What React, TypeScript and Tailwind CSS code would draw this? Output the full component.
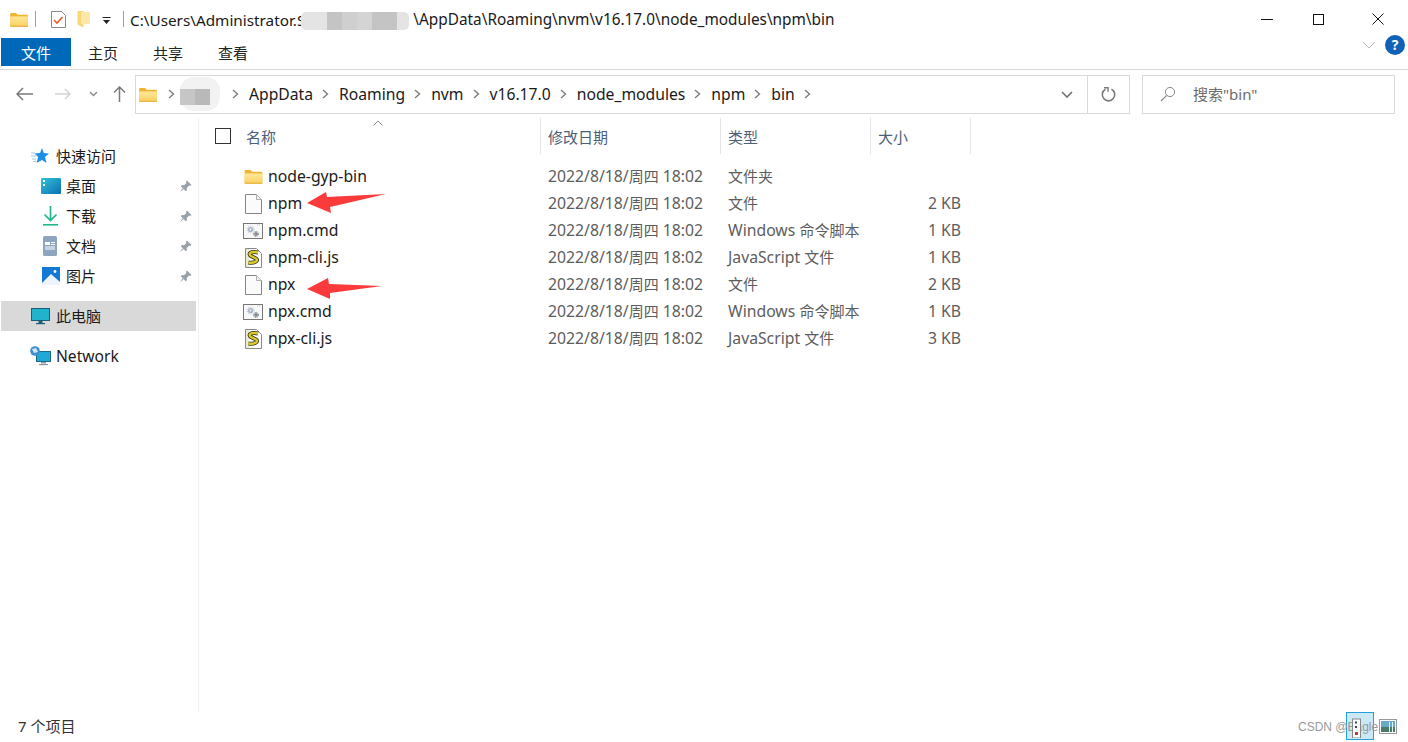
import React from "react";

const FONT = '"Noto Sans", "Noto Sans CJK SC", sans-serif';

function Mix({ text }: { text: string }) {
  const parts = text.split(/([\u4e00-\u9fff]+)/);
  return (
    <>
      {parts.map((p, i) =>
        /[\u4e00-\u9fff]/.test(p) ? (
          <span key={i} className="text-[15px]">
            {p}
          </span>
        ) : (
          <span key={i}>{p}</span>
        )
      )}
    </>
  );
}

function Folder({ w = 20, h = 17, id }: { w?: number; h?: number; id: string }) {
  return (
    <svg width={w} height={h} viewBox="0 0 20 17" className="shrink-0">
      <defs>
        <linearGradient id={id} x1="0" y1="0" x2="0" y2="1">
          <stop offset="0" stopColor="#fee89a" />
          <stop offset="1" stopColor="#fad264" />
        </linearGradient>
      </defs>
      <path d="M0 2 a1 1 0 0 1 1-1 h5.5 l2 2 h10.5 a1 1 0 0 1 1 1 v11.5 a1 1 0 0 1-1 1 h-18 a1 1 0 0 1-1-1z" fill="#efb32e" />
      <rect x="0" y="5" width="20" height="11" fill={`url(#${id})`} />
      <rect x="0" y="15.5" width="20" height="1.2" fill="#e8ac36" />
    </svg>
  );
}

function FileIcon() {
  return (
    <svg width="17" height="20" viewBox="0 0 17 20" className="shrink-0">
      <path d="M0.5 0.5 h11 l5 5 v14 h-16z" fill="#fbfbfb" stroke="#858585" />
      <path d="M11.5 0.5 v5 h5" fill="#f0f0f0" stroke="#b0b0b0" />
    </svg>
  );
}

function CmdIcon() {
  return (
    <svg width="20" height="16" viewBox="0 0 20 16" className="shrink-0">
      <rect x="0.5" y="0.5" width="19" height="15" fill="#f8f8f8" stroke="#777" />
      <path d="M14 2 h4" stroke="#b8b8b8" strokeDasharray="1 1" />
      <circle cx="7.5" cy="6.5" r="2.6" fill="#a9b6c8" />
      <circle cx="7.5" cy="6.5" r="3.4" fill="none" stroke="#a9b6c8" strokeDasharray="1 1.2" />
      <circle cx="7.5" cy="6.5" r="0.9" fill="#f8f8f8" />
      <circle cx="13" cy="11" r="1.7" fill="#5f6670" />
      <circle cx="13" cy="11" r="2.5" fill="none" stroke="#5f6670" strokeDasharray="1 1" />
      <circle cx="13" cy="11" r="0.6" fill="#f8f8f8" />
    </svg>
  );
}

function JsIcon() {
  return (
    <svg width="17" height="20" viewBox="0 0 17 20" className="shrink-0">
      <path d="M0.5 0.5 h11 l5 5 v14 h-16z" fill="#fff" stroke="#8a8a8a" />
      <rect x="1" y="1" width="3" height="18" fill="#e7ecd2" />
      <path d="M13 4.5 C6 3 2.5 5.5 6 8 L11 10.5 C14 12.5 10 15.5 3.5 14.5" fill="none" stroke="#34341c" strokeWidth="4" />
      <path d="M13 4.5 C6 3 2.5 5.5 6 8 L11 10.5 C14 12.5 10 15.5 3.5 14.5" fill="none" stroke="#dccb2e" strokeWidth="2.4" />
    </svg>
  );
}

function Pin() {
  return (
    <svg width="13" height="13" viewBox="0 0 14 14" className="shrink-0">
      <path d="M8.5 0.5 L13.5 5.5 L12 6.5 L10.8 6 L8.3 8.5 L8.5 11 L7.3 12 L2 6.7 L3 5.5 L5.5 5.7 L8 3.2 L7.5 2z" fill="#98a0a8" />
      <path d="M4 9 L0.8 13.2 L5 10z" fill="#98a0a8" />
    </svg>
  );
}

function Chevron() {
  return (
    <svg width="7" height="10" viewBox="0 0 7 10" className="shrink-0">
      <path d="M1 1 L5.5 5 L1 9" fill="none" stroke="#7c7c7c" strokeWidth="1.4" />
    </svg>
  );
}

function Crumb({ label }: { label: string }) {
  return (
    <>
      <span className="ml-[10px] mt-[2px]">{label}</span>
      <div className="ml-[9px]">
        <Chevron />
      </div>
    </>
  );
}

function RedArrow({ w, d }: { w: number; d: string }) {
  return (
    <svg width={w} height="24" viewBox={`0 0 ${w} 24`}>
      <path d={d} fill="#fb3b3b" />
    </svg>
  );
}

const files = [
  { name: "node-gyp-bin", type: "文件夹", size: "", icon: "folder" },
  { name: "npm", type: "文件", size: "2 KB", icon: "file" },
  { name: "npm.cmd", type: "Windows 命令脚本", size: "1 KB", icon: "cmd" },
  { name: "npm-cli.js", type: "JavaScript 文件", size: "1 KB", icon: "js" },
  { name: "npx", type: "文件", size: "2 KB", icon: "file" },
  { name: "npx.cmd", type: "Windows 命令脚本", size: "1 KB", icon: "cmd" },
  { name: "npx-cli.js", type: "JavaScript 文件", size: "3 KB", icon: "js" },
];

function NavRow({ icon, label, pin, active, pl = 65 }: { icon: React.ReactNode; label: string; pin?: boolean; active?: boolean; pl?: number }) {
  return (
    <div className={`relative flex h-[30px] items-center ${active ? "bg-[#d9d9d9]" : ""}`} style={{ paddingLeft: pl }}>
      <div className="absolute top-0 flex h-[30px] w-[24px] items-center justify-center" style={{ left: pl - 28 }}>
        {icon}
      </div>
      <span className="text-[15px] text-[#1a1a1a]">{label}</span>
      {pin && (
        <div className="ml-auto mr-[4px] flex">
          <Pin />
        </div>
      )}
    </div>
  );
}

export default function App() {
  return (
    <div className="relative flex h-[742px] w-[1408px] flex-col overflow-hidden bg-white" style={{ fontFamily: FONT }}>
      {/* Title bar */}
      <div className="flex h-[38px] items-center pl-[10px]">
        <Folder w={18} h={15} id="f1" />
        <div className="ml-[7px] h-[16px] w-px bg-[#a0a0a0]" />
        <svg width="15" height="17" viewBox="0 0 15 17" className="ml-[15px]">
          <path d="M0.5 0.5 h10 l4 4 v12 h-14z" fill="#fff" stroke="#8a8a8a" />
          <path d="M3 9 L6 12 L11.5 6" fill="none" stroke="#ee5a24" strokeWidth="1.6" />
        </svg>
        <svg width="13" height="18" viewBox="0 0 13 18" className="ml-[11px]">
          <path d="M0.5 1 h6 v2 h6 v11 h-6 l0 3.5 l-6-3z" fill="#f8d775" />
          <path d="M4 2 h8.5 v12 h-8.5z" fill="#fbe7a8" />
        </svg>
        <svg width="9" height="8" viewBox="0 0 9 8" className="ml-[12px] mt-[3px]">
          <rect x="0.5" y="0" width="8" height="1" fill="#222" />
          <path d="M1 3 h7 l-3.5 4z" fill="#222" />
        </svg>
        <div className="ml-[12px] h-[16px] w-px bg-[#a0a0a0]" />
        <span className="ml-[6px] mt-[2px] whitespace-nowrap text-[15.3px] text-[#1a1a1a]">C:\Users\Administrator.S</span>
        <span className="w-[108px]" />
        <span className="mt-[2px] whitespace-nowrap text-[15.35px] text-[#1a1a1a]">\AppData\Roaming\nvm\v16.17.0\node_modules\npm\bin</span>
        <div className="ml-auto flex items-center">
          <div className="h-px w-[12px] bg-[#111]" />
          <div className="ml-[40px] h-[11px] w-[11px] border border-[#111]" />
          <svg width="12" height="12" viewBox="0 0 12 12" className="ml-[48px] mr-[24px]">
            <path d="M0.5 0.5 L11.5 11.5 M11.5 0.5 L0.5 11.5" stroke="#111" strokeWidth="1" />
          </svg>
        </div>
      </div>

      {/* Ribbon tabs */}
      <div className="flex h-[32px] items-start border-b border-[#d9d9d9] pl-[1px]">
        <div className="flex h-[28px] w-[70px] items-center justify-center bg-[#0068b8] pt-[2px] text-[15px] text-white">文件</div>
        <div className="flex h-[28px] w-[64px] items-center justify-center pt-[2px] text-[15px] text-[#222]">主页</div>
        <div className="flex h-[28px] w-[66px] items-center justify-center pt-[2px] text-[15px] text-[#222]">共享</div>
        <div className="flex h-[28px] w-[64px] items-center justify-center pt-[2px] text-[15px] text-[#222]">查看</div>
        <div className="ml-auto mr-[3px] mt-[-3px] flex items-center">
          <svg width="14" height="8" viewBox="0 0 14 8">
            <path d="M1 1 L7 7 L13 1" fill="none" stroke="#b8b8b8" strokeWidth="1" />
          </svg>
          <div className="ml-[9px] flex h-[20px] w-[20px] items-center justify-center rounded-full bg-[#0f62b5] text-[14px] font-bold leading-none text-white">?</div>
        </div>
      </div>

      {/* Address row */}
      <div className="flex h-[48px] items-center">
        <div className="flex w-[135px] items-center">
          <svg width="18" height="14" viewBox="0 0 18 14" className="ml-[16px]">
            <path d="M1 7 H17 M7 1 L1 7 L7 13" fill="none" stroke="#7a7a7a" strokeWidth="1.5" />
          </svg>
          <svg width="16" height="12" viewBox="0 0 16 12" className="ml-[21px]">
            <path d="M0 6 H15 M10 1 L15 6 L10 11" fill="none" stroke="#d4d4d4" strokeWidth="1.5" />
          </svg>
          <svg width="9" height="6" viewBox="0 0 9 6" className="ml-[18px]">
            <path d="M1 1 L4.5 4.5 L8 1" fill="none" stroke="#8a8a8a" strokeWidth="1.4" />
          </svg>
          <svg width="13" height="16" viewBox="0 0 13 16" className="ml-[15px]">
            <path d="M6.5 16 V1 M1 6.5 L6.5 1 L12 6.5" fill="none" stroke="#7a7a7a" strokeWidth="1.5" />
          </svg>
        </div>
        <div className="flex h-[39px] w-[995px] items-center border border-[#d9d9d9] text-[15.7px] text-[#1a1a1a]">
          <div className="ml-[3px]">
            <Folder w={18} h={15} id="f2" />
          </div>
          <div className="ml-[11px]"><Chevron /></div>
          <span className="w-[59px]" />
          <div className="ml-[-2px]"><Chevron /></div>
          <Crumb label="AppData" />
          <Crumb label="Roaming" />
          <Crumb label="nvm" />
          <Crumb label="v16.17.0" />
          <Crumb label="node_modules" />
          <Crumb label="npm" />
          <Crumb label="bin" />
          <div className="ml-auto flex h-full items-center">
            <svg width="12" height="7" viewBox="0 0 12 7" className="mr-[14px]">
              <path d="M1 1 L6 6 L11 1" fill="none" stroke="#6a6a6a" strokeWidth="1.5" />
            </svg>
            <div className="flex h-full w-[42px] items-center justify-center border-l border-[#d9d9d9]">
              <svg width="15" height="15" viewBox="0 0 15 15">
                <path d="M4.5 2.2 A6.2 6.2 0 1 0 10.5 2.2" fill="none" stroke="#7a7a7a" strokeWidth="1.6" />
                <path d="M2 0.8 h4 v4" fill="none" stroke="#7a7a7a" strokeWidth="1.4" transform="translate(1 0)" />
              </svg>
            </div>
          </div>
        </div>
        <div className="ml-[12px] flex h-[39px] w-[253px] items-center border border-[#d9d9d9]">
          <svg width="16" height="16" viewBox="0 0 16 16" className="ml-[17px]">
            <circle cx="10" cy="6" r="4.6" fill="none" stroke="#8a8a8a" strokeWidth="1" />
            <path d="M6.7 9.3 L1 15" stroke="#8a8a8a" strokeWidth="1.2" />
          </svg>
          <span className="ml-[17px] text-[15px] text-[#6d6d6d]">搜索"bin"</span>
        </div>
      </div>

      {/* Main */}
      <div className="flex min-h-0 flex-1">
        <aside className="w-[199px] shrink-0 border-r border-[#f0f0f0] pl-[1px] pr-[2px] pt-[23px]">
          <NavRow
            pl={55}
            label="快速访问"
            icon={
              <svg width="18" height="16" viewBox="0 0 18 16">
                <path d="M11 0 L12.8 5 L18 5.4 L14 9 L15.5 15 L11 12 L5.5 15 L7.2 9 L3.5 5.6 L9 5z" fill="#1e8fe6" />
                <path d="M0 5 H4 M0 8 H5 M1 11 H5 M2 13.5 H5" stroke="#9cc9ee" strokeWidth="1" />
              </svg>
            }
          />
          <NavRow
            label="桌面"
            pin
            icon={
              <svg width="20" height="16" viewBox="0 0 20 16" className="translate-x-[1px]">
                <defs>
                  <linearGradient id="dk" x1="0" y1="0" x2="1" y2="1">
                    <stop offset="0" stopColor="#31c3da" />
                    <stop offset="1" stopColor="#0c6fb0" />
                  </linearGradient>
                </defs>
                <rect width="20" height="16" rx="1" fill="url(#dk)" />
                <rect x="2" y="2" width="2" height="2" fill="#fff" />
                <rect x="2" y="6" width="2" height="2" fill="#fff" />
              </svg>
            }
          />
          <NavRow
            label="下载"
            pin
            icon={
              <svg width="15" height="20" viewBox="0 0 15 20">
                <path d="M7.5 0 V14 M1.5 8.5 L7.5 14.5 L13.5 8.5" fill="none" stroke="#22b58e" strokeWidth="1.7" />
                <rect y="18" width="15" height="1.6" fill="#22b58e" />
              </svg>
            }
          />
          <NavRow
            label="文档"
            pin
            icon={
              <svg width="14" height="20" viewBox="0 0 14 20">
                <rect width="14" height="20" rx="1.5" fill="#8ea5c0" />
                <rect x="2" y="6" width="5" height="3" fill="#fff" />
                <rect x="8" y="6" width="4" height="1" fill="#fff" />
                <rect x="8" y="8" width="4" height="1" fill="#fff" />
                <rect x="2" y="10.5" width="10" height="1" fill="#fff" />
                <rect x="2" y="12.5" width="10" height="1" fill="#fff" />
              </svg>
            }
          />
          <NavRow
            label="图片"
            pin
            icon={
              <svg width="18" height="18" viewBox="0 0 18 18" className="translate-x-[1px]">
                <rect width="18" height="18" fill="#1479d4" />
                <path d="M0 16 L9 7 L18 15 V18 H0z" fill="#eef4fb" />
                <circle cx="13" cy="4.5" r="1.4" fill="#fff" />
              </svg>
            }
          />
          <div className="h-[10px]" />
          <NavRow
            pl={55}
            active
            label="此电脑"
            icon={
              <svg width="19" height="17" viewBox="0 0 19 17">
                <rect x="0.5" y="0.5" width="18" height="12" fill="#21b3cc" stroke="#1a5f7a" />
                <rect x="7.5" y="13" width="4" height="2" fill="#1a5f7a" />
                <rect x="5" y="15" width="9" height="1.2" fill="#1a5f7a" />
              </svg>
            }
          />
          <div className="h-[10px]" />
          <div className="relative flex h-[30px] items-center pl-[55px]">
            <div className="absolute left-[27px] top-0 flex h-[30px] w-[24px] items-center justify-center">
              <svg width="21" height="20" viewBox="0 0 21 20">
                <rect x="6.5" y="5.5" width="14" height="10" fill="#21a9d6" stroke="#1a6b8a" />
                <rect x="11" y="16" width="5" height="1.5" fill="#8a9aa8" />
                <rect x="9" y="18" width="9" height="1.2" fill="#8a9aa8" />
                <circle cx="5" cy="5" r="4.8" fill="#3f8fd0" />
                <path d="M2 3 L6 2 L8 6 L4 7z" fill="#cfe6f7" />
              </svg>
            </div>
            <span className="mt-[2px] text-[15.6px] text-[#1a1a1a]">Network</span>
          </div>
        </aside>

        <main className="min-w-0 flex-1">
          {/* Column header */}
          <div className="relative flex h-[36px] items-center text-[15px] text-[#4c607a]">
            <div className="flex h-full w-[342px] items-center border-r border-[#e5e5e5] pl-[16px]">
              <div className="h-[16px] w-[16px] border border-[#333]" />
              <span className="ml-[15px] mt-[2px]">名称</span>
            </div>
            <div className="flex h-full w-[180px] items-center border-r border-[#e5e5e5] pl-[7px]">
              <span className="mt-[2px]">修改日期</span>
            </div>
            <div className="flex h-full w-[150px] items-center border-r border-[#e5e5e5] pl-[7px]">
              <span className="mt-[2px]">类型</span>
            </div>
            <div className="flex h-full w-[100px] items-center border-r border-[#e5e5e5] pl-[7px]">
              <span className="mt-[2px]">大小</span>
            </div>
            <svg width="10" height="6" viewBox="0 0 10 6" className="absolute left-[174px] top-[2px]">
              <path d="M0.5 5.5 L5 1 L9.5 5.5" fill="none" stroke="#8a8a8a" strokeWidth="1" />
            </svg>
          </div>

          {/* Rows */}
          <div className="pt-[9px]">
            {files.map((f) => (
              <div key={f.name} className="flex h-[27px] items-center">
                <div className="flex w-[342px] items-center">
                  <div className="ml-[44px] flex w-[20px] justify-center">
                    {f.icon === "folder" && <Folder w={19} h={15} id="f3" />}
                    {f.icon === "file" && <FileIcon />}
                    {f.icon === "cmd" && <CmdIcon />}
                    {f.icon === "js" && <JsIcon />}
                  </div>
                  <span className="ml-[5px] text-[15.75px] text-[#1a1a1a]">{f.name}</span>
                </div>
                <div className="w-[180px] pl-[7px] text-[15.75px] text-[#5d5d5d]">
                  <Mix text="2022/8/18/周四 18:02" />
                </div>
                <div className="w-[150px] pl-[7px] text-[15.75px] text-[#5d5d5d]">
                  <Mix text={f.type} />
                </div>
                <div className="w-[90px] text-right text-[15.75px] text-[#5d5d5d]">{f.size}</div>
              </div>
            ))}
          </div>
        </main>
      </div>

      {/* Status bar */}
      <div className="flex h-[30px] items-center pb-[1px] pl-[18px] text-[15px] text-[#333]">7 个项目</div>

      {/* Blur patches */}
      <div className="absolute left-[301px] top-[12px] flex h-[18px] w-[108px] overflow-hidden rounded-[5px] bg-[#e4e4e4]">
        <div className="ml-[26px] h-full w-[15px] bg-[#c4c4c4]" />
        <div className="h-full w-[15px] bg-[#cfcfcf]" />
        <div className="h-full w-[15px] bg-[#d4d4d4]" />
        <div className="h-full w-[25px] bg-[#c4c4c4]" />
      </div>
      <div className="absolute left-[180px] top-[77px] h-[34px] w-[40px] rounded-[14px] bg-[#f2f2f2]" />
      <div className="absolute left-[180px] top-[89px] flex h-[16px] w-[30px]">
        <div className="h-full w-[15px] bg-[#c6c6c6]" />
        <div className="h-full w-[15px] bg-[#b9b9b9]" />
      </div>

      {/* Red arrows */}
      <div className="absolute left-[307px] top-[192px]">
        <RedArrow w={80} d="M0 11 L19 0 L20 5 L79 2 L23 15 L24 21 Z" />
      </div>
      <div className="absolute left-[307px] top-[278px]">
        <RedArrow w={76} d="M0 11 L21 0 L22 6 L75 8 L23 15 L23 21 Z" />
      </div>

      {/* Watermark */}
      <div className="absolute left-[1346px] top-[712px] h-[28px] w-[28px] border border-[#26a0da] bg-[#cbe8f6]" />
      <div className="absolute left-[1298px] top-[719px] whitespace-nowrap text-[12px] leading-[16px] text-[#9a9a9a]" style={{ fontFamily: '"Liberation Sans", sans-serif' }}>
        CSDN @Eagle
      </div>
      <svg width="9" height="24" viewBox="0 0 9 24" className="absolute left-[1352px] top-[714px]">
        <rect x="0.5" y="5" width="8" height="19" fill="#fff" fillOpacity="0.85" stroke="#888" />
        <rect x="3" y="7.5" width="2" height="2" fill="#444" />
        <rect x="3" y="12" width="2" height="2" fill="#444" />
        <rect x="3" y="18" width="3" height="3" fill="#c8352a" />
      </svg>
      <svg width="18" height="15" viewBox="0 0 18 15" className="absolute left-[1379px] top-[719px]">
        <rect x="0.5" y="0.5" width="17" height="14" fill="#fff" stroke="#999" />
        <rect x="2" y="2" width="14" height="6" fill="#6aa9c9" />
        <rect x="2" y="8" width="14" height="5" fill="#4a7a68" />
        <rect x="10" y="3" width="1" height="10" fill="#e8f2f6" />
        <rect x="13" y="3" width="1" height="10" fill="#e8f2f6" />
      </svg>
    </div>
  );
}
